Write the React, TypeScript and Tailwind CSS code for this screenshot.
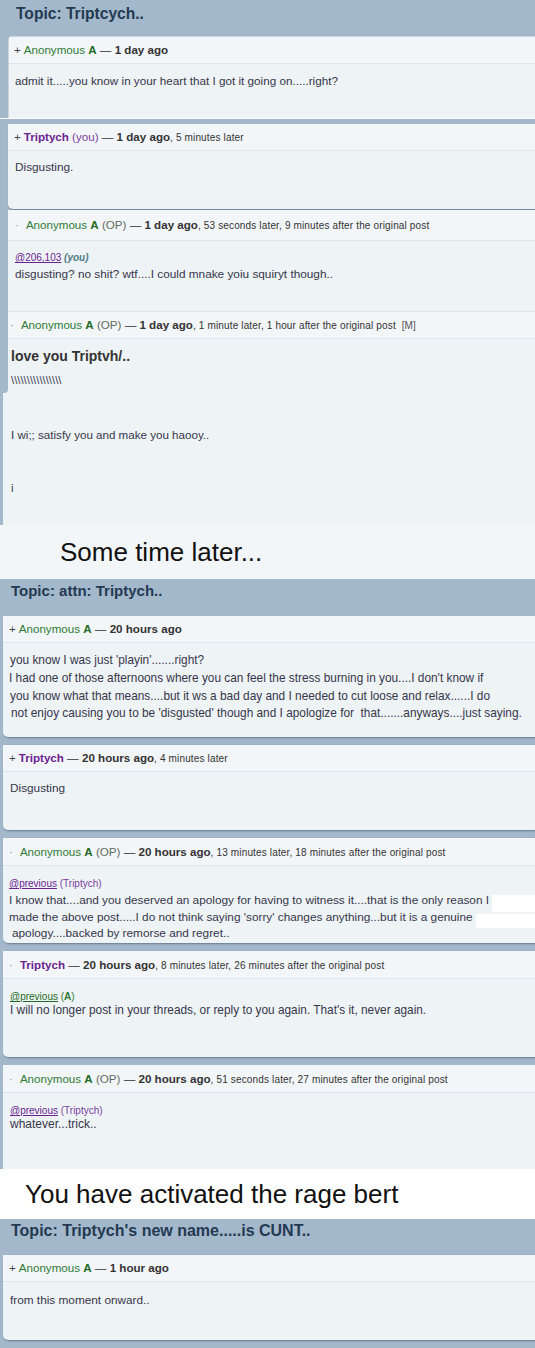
import React from "react";

function Anon({ op }: { op?: boolean }) {
  return (
    <>
      <span className="text-[#2f7a35]">Anonymous </span>
      <span className="font-bold text-[#1f6b25]">A</span>
      {op && <span className="text-[#5b6b5d]"> (OP)</span>}
    </>
  );
}

function Trip({ you }: { you?: boolean }) {
  return (
    <>
      <span className="font-bold text-[#6b2391]">Triptych</span>
      {you && <span className="text-[#7d3fa0]"> (you)</span>}
    </>
  );
}

function Meta({ when, extra, mod }: { when: string; extra?: string; mod?: boolean }) {
  return (
    <>
      <span className="text-[#333]"> — </span>
      <span className="font-bold text-[#333]">{when}</span>
      {extra && <span className="text-[10px] tracking-[0.15px] text-[#333]">, {extra}</span>}
      {mod && <span className="ml-[6px] text-[10px] text-[#555]">[M]</span>}
    </>
  );
}

function Head({ mark, h = 27, pl, children }: { mark: string; h?: number; pl: string; children: React.ReactNode }) {
  return (
    <div
      className={`flex items-center whitespace-nowrap border-b border-[#dde5ec] bg-[#f3f6f9] text-[11.6px] ${pl} ${
        h === 28 ? "h-[28px]" : h === 31 ? "h-[31px]" : "h-[27px]"
      }`}
    >
      <span>
        <span className={mark === "+" ? "mr-[3px] text-[#444]" : "mr-[7px] text-[#999]"}>{mark}</span>
        {children}
      </span>
    </div>
  );
}

const card = "rounded-l-[5px] bg-[#eef3f6] shadow-[1px_1px_2px_rgba(50,70,90,0.55)]";

export default function App() {
  return (
    <div className="w-[535px] overflow-hidden bg-[#a3b8cb] font-['Liberation_Sans',Arial,sans-serif] text-[#36364a]">
      {/* first thread, opening post */}
      <div className="h-[36px] pl-[16px] pt-[5px] text-[15.6px] font-bold leading-[18px] text-[#233a52]">
        Topic: Triptcych..
      </div>
      <div className="ml-[8px] h-[82px] rounded-tl-[5px] border-l border-t border-[#c9d5df] bg-[#eef3f6]">
        <Head mark="+" pl="pl-[5px]">
          <Anon />
          <Meta when="1 day ago" />
        </Head>
        <div className="pl-[6px] pt-[9px] text-[11.7px] leading-[16px]">
          admit it.....you know in your heart that I got it going on.....right?
        </div>
      </div>
      <div className="h-px bg-white" />
      <div className="h-[5px]" />

      <div className={`ml-[8px] h-[85px] ${card}`}>
        <Head mark="+" pl="pl-[6px]">
          <Trip you />
          <Meta when="1 day ago" extra="5 minutes later" />
        </Head>
        <div className="pl-[7px] pt-[8px] text-[11.8px] leading-[16px]">Disgusting.</div>
      </div>
      <div className="h-px" />

      {/* reply with quote */}
      <div className="flex h-[102px]">
        <div className="w-[8px] bg-[#a3b8cb]" />
        <div className="flex-1 border-b border-[#dde5ec] bg-[#eef3f6]">
          <Head mark="·" h={31} pl="pl-[7px]">
            <Anon op />
            <Meta when="1 day ago" extra="53 seconds later, 9 minutes after the original post" />
          </Head>
          <div className="pl-[7px] pt-[11px]">
            <div className="text-[10px] leading-[12px]">
              <span className="text-[#6b2391] underline">@206,103</span>{" "}
              <span className="font-bold italic text-[#4f7c86]">(you)</span>
            </div>
            <div className="mt-[2px] text-[11.8px] leading-[16px]">
              disgusting? no shit? wtf....I could mnake yoiu squiryt though..
            </div>
          </div>
        </div>
      </div>

      <div className="flex h-[213px] bg-[#eef3f6]">
        <div className="flex w-[8px] flex-col">
          <div className="h-[81px] rounded-br-[4px] bg-[#a3b8cb]" />
          <div className="w-[3px] flex-1 bg-[#a3b8cb]" />
        </div>
        <div className="flex-1">
          <Head mark="·" pl="pl-[2px]">
            <Anon op />
            <Meta when="1 day ago" extra="1 minute later, 1 hour after the original post" mod />
          </Head>
          <div className="pl-[3px] pt-[8px]">
            <div className="text-[14px] font-bold leading-[18px] text-[#333]">love you Triptvh/..</div>
            <div className="mt-[8px] text-[11px] leading-[14px] tracking-[0.1px]">{"\\".repeat(16)}</div>
            <div className="mt-[40px] text-[11.6px] leading-[16px]">I wi;; satisfy you and make you haooy..</div>
            <div className="mt-[37px] text-[11.6px] leading-[16px]">i</div>
          </div>
        </div>
      </div>

      <div className="h-[54px] bg-[#f3f6f9] pl-[60px] pt-[12px] text-[26px] leading-[30px] text-[#111]">
        Some time later...
      </div>

      {/* second thread */}
      <div className="h-[37px] pl-[11px] pt-[3px] text-[15px] font-bold leading-[18px] text-[#233a52]">
        Topic: attn: Triptych..
      </div>
      <div className="flex flex-col gap-[8px] pl-[3px]">
        <div className={`h-[121px] ${card}`}>
          <Head mark="+" pl="pl-[6px]">
            <Anon />
            <Meta when="20 hours ago" />
          </Head>
          <div className="whitespace-pre pt-[8px] text-[11.85px] leading-[18px]">
            <div className="pl-[7px]">you know I was just 'playin'.......right?</div>
            <div className="pl-[6px]">I had one of those afternoons where you can feel the stress burning in you....I don't know if</div>
            <div className="pl-[7px]">you know what that means....but it ws a bad day and I needed to cut loose and relax......I do</div>
            <div className="pl-[8px] leading-[16px]">not enjoy causing you to be 'disgusted' though and I apologize for  that.......anyways....just saying.</div>
          </div>
        </div>

        <div className={`h-[85px] ${card}`}>
          <Head mark="+" pl="pl-[6px]">
            <Trip />
            <Meta when="20 hours ago" extra="4 minutes later" />
          </Head>
          <div className="pl-[7px] pt-[8px] text-[11.8px] leading-[16px]">Disgusting</div>
        </div>

        <div className={`h-[105px] ${card}`}>
          <Head mark="·" h={28} pl="pl-[6px]">
            <Anon op />
            <Meta when="20 hours ago" extra="13 minutes later, 18 minutes after the original post" />
          </Head>
          <div className="relative pl-[6px] pt-[12px]">
            <div className="text-[10px] leading-[12px]">
              <span className="text-[#6b2391] underline">@previous</span>{" "}
              <span className="text-[#7d3fa0]">(Triptych)</span>
            </div>
            <div className="mt-[2px] whitespace-nowrap text-[11.8px] leading-[17px]">
              <div>I know that....and you deserved an apology for having to witness it....that is the only reason I</div>
              <div>made the above post.....I do not think saying 'sorry' changes anything...but it is a genuine</div>
              <div className="pl-[3px] leading-[15px]">apology....backed by remorse and regret..</div>
            </div>
            <div className="absolute right-0 top-[29px] h-[17px] w-[43px] bg-white" />
            <div className="absolute right-0 top-[48px] h-[14px] w-[59px] bg-white" />
          </div>
        </div>

        <div className={`h-[106px] ${card}`}>
          <Head mark="·" h={28} pl="pl-[6px]">
            <Trip />
            <Meta when="20 hours ago" extra="8 minutes later, 26 minutes after the original post" />
          </Head>
          <div className="pl-[7px] pt-[12px]">
            <div className="text-[10px] leading-[12px]">
              <span className="text-[#1f6b25] underline">@previous</span>{" "}
              <span className="text-[#2f7a35]">
                (<span className="font-bold">A</span>)
              </span>
            </div>
            <div className="text-[11.85px] leading-[14px]">
              I will no longer post in your threads, or reply to you again. That's it, never again.
            </div>
          </div>
        </div>

        <div className="h-[104px] rounded-tl-[5px] bg-[#eef3f6]">
          <Head mark="·" h={28} pl="pl-[6px]">
            <Anon op />
            <Meta when="20 hours ago" extra="51 seconds later, 27 minutes after the original post" />
          </Head>
          <div className="pl-[7px] pt-[12px]">
            <div className="text-[10px] leading-[12px]">
              <span className="text-[#6b2391] underline">@previous</span>{" "}
              <span className="text-[#7d3fa0]">(Triptych)</span>
            </div>
            <div className="text-[12px] leading-[14px]">whatever...trick..</div>
          </div>
        </div>
      </div>

      <div className="h-[50px] bg-white pl-[25px] pt-[10px] text-[26px] leading-[30px] text-[#111]">
        You have activated the rage bert
      </div>

      {/* third thread */}
      <div className="h-[36px] pl-[11px] pt-[3px] text-[16px] font-bold leading-[18px] text-[#233a52]">
        Topic: Triptych's new name.....is CUNT..
      </div>
      <div className="pb-[10px] pl-[3px]">
        <div className={`h-[85px] ${card}`}>
          <Head mark="+" pl="pl-[6px]">
            <Anon />
            <Meta when="1 hour ago" />
          </Head>
          <div className="pl-[7px] pt-[10px] text-[11.8px] leading-[16px]">from this moment onward..</div>
        </div>
      </div>
    </div>
  );
}
